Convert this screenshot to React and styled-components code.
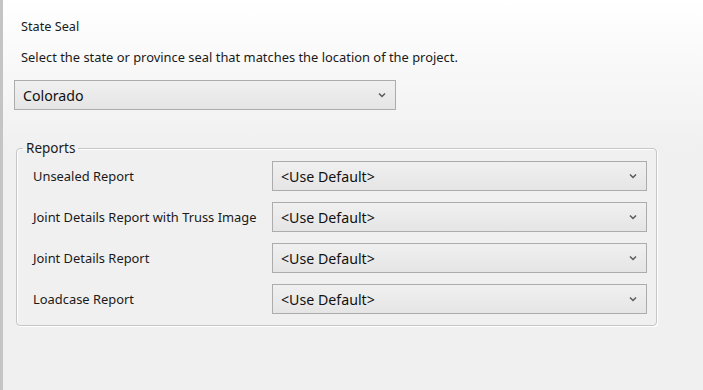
import React from 'react'
import styled, { createGlobalStyle } from 'styled-components'

const GlobalStyle = createGlobalStyle`
  html, body {
    margin: 0;
    padding: 0;
  }
  body {
    font-family: "Noto Sans", "Open Sans", sans-serif;
    color: #1a1a1a;
  }
`

const Page = styled.div`
  box-sizing: border-box;
  width: 703px;
  height: 390px;
  border-left: 3px solid #c4c4c4;
  background: linear-gradient(to bottom, #ffffff 0px, #f0f0f0 150px, #f0f0f0 100%);
  padding: 17px 0 0 11px;
  overflow: hidden;
`

const Title = styled.div`
  font-size: 12.7px;
  line-height: 18px;
  padding-left: 7px;
`

const Description = styled.div`
  font-size: 12.9px;
  line-height: 18px;
  padding-left: 7px;
  margin-top: 13px;
`

const Combo = styled.div`
  box-sizing: border-box;
  display: flex;
  align-items: center;
  justify-content: space-between;
  width: ${(p) => p.$width}px;
  height: 30px;
  padding: 0 9px 0 8px;
  border: 1px solid #acacac;
  background: linear-gradient(to bottom, #f0f0f0, #e5e5e5);
  font-size: 14.2px;
  color: #111;
`

const StateCombo = styled(Combo)`
  margin-top: 14px;
`

const GroupBox = styled.fieldset`
  box-sizing: border-box;
  width: 641px;
  margin: 30px 0 0 2px;
  padding: 5px 9px 11px 16px;
  border: 1px solid #c6c6c6;
  border-radius: 4px;
  box-shadow: inset 1px 1px 0 #ffffff, 1px 1px 0 #ffffff;
`

const Legend = styled.legend`
  font-size: 13.5px;
  padding: 0 3px;
  margin-left: -10px;
  line-height: 16px;
`

const Rows = styled.div`
  display: grid;
  grid-template-columns: 239px 375px;
  grid-auto-rows: 30px;
  row-gap: 11px;
  align-items: center;
`

const Label = styled.div`
  font-size: 12.9px;
`

const Chevron = () => (
  <svg width="8" height="6" viewBox="0 0 8 6">
    <path d="M1 1.5 L4 4.5 L7 1.5" fill="none" stroke="#5a5a5a" strokeWidth="1.5" />
  </svg>
)

const reports = [
  'Unsealed Report',
  'Joint Details Report with Truss Image',
  'Joint Details Report',
  'Loadcase Report',
]

export default function App() {
  return (
    <Page>
      <GlobalStyle />
      <Title>State Seal</Title>
      <Description>
        Select the state or province seal that matches the location of the project.
      </Description>
      <StateCombo $width={382}>
        <span>Colorado</span>
        <Chevron />
      </StateCombo>
      <GroupBox>
        <Legend>Reports</Legend>
        <Rows>
          {reports.map((r) => (
            <React.Fragment key={r}>
              <Label>{r}</Label>
              <Combo $width={375}>
                <span>&lt;Use Default&gt;</span>
                <Chevron />
              </Combo>
            </React.Fragment>
          ))}
        </Rows>
      </GroupBox>
    </Page>
  )
}
